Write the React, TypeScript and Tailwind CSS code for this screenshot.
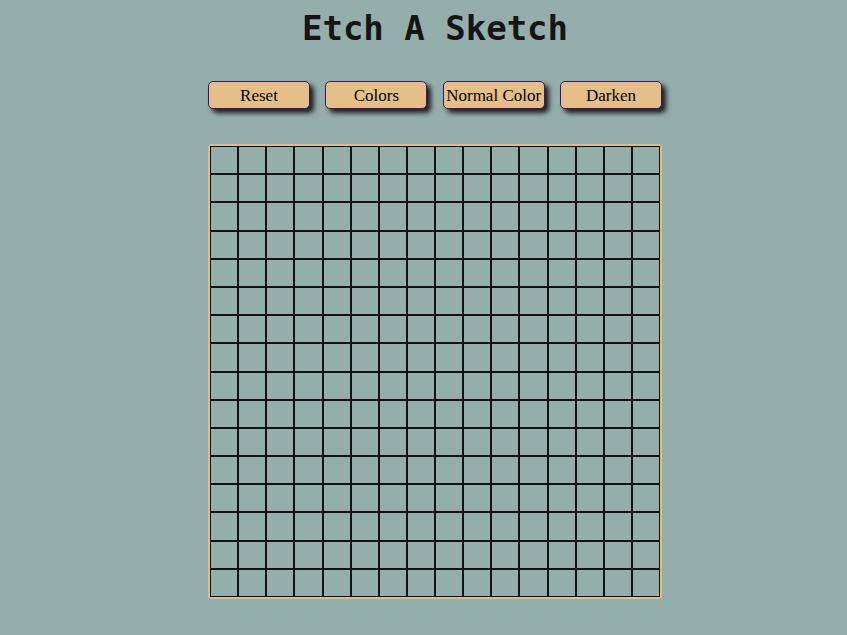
import React from 'react';

const buttons = ['Reset', 'Colors', 'Normal Color', 'Darken'];
const cells = Array.from({ length: 256 }, (_, i) => i);

export default function App() {
  return (
    <div className="min-h-[635px] w-full bg-[#94aeac] pl-[23px]">
      <div className="flex flex-col items-center">
        <h1 className="mt-[3px] text-[34px] font-bold leading-normal text-[#151515] font-['DejaVu_Sans_Mono',monospace]">
          Etch A Sketch
        </h1>

        <div className="mt-[27px] flex w-[454px] justify-between">
          {buttons.map((label) => (
            <button
              key={label}
              className="h-[28px] w-[102px] rounded-[5px] border-[1.5px] border-[#361a6e] bg-[#e5bf87] text-[17px] leading-none text-black shadow-[4px_4px_5px_#1e1e1e] font-['Liberation_Serif',serif]"
            >
              {label}
            </button>
          ))}
        </div>

        <div className="mt-[35px] grid h-[455px] w-[454px] grid-cols-16 grid-rows-16 rounded-[4px] border-2 border-[#e3bc84] bg-[#94aeac]">
          {cells.map((i) => (
            <div key={i} className="border border-[#111]" />
          ))}
        </div>
      </div>
    </div>
  );
}
